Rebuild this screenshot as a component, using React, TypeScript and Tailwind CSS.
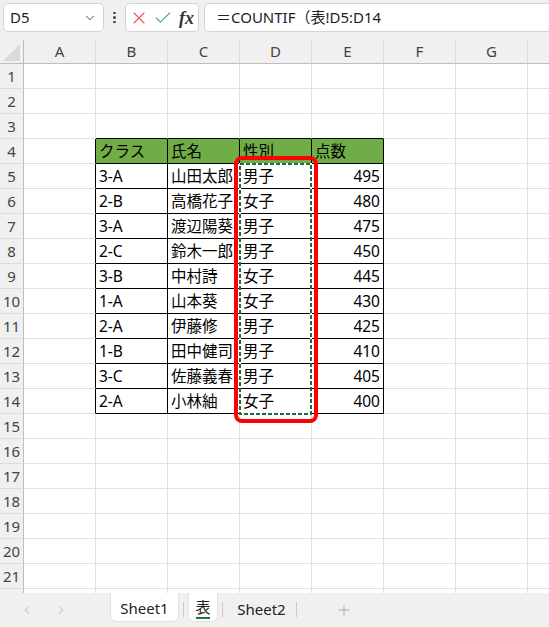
import { ChevronDown, ChevronLeft, ChevronRight, Check, X, Plus } from "lucide-react";

const columns = ["A", "B", "C", "D", "E", "F", "G", "H"];

type Student = { cls: string; name: string; sex: string; score: number };

const students: Student[] = [
    { cls: "3-A", name: "山田太郎", sex: "男子", score: 495 },
    { cls: "2-B", name: "高橋花子", sex: "女子", score: 480 },
    { cls: "3-A", name: "渡辺陽葵", sex: "男子", score: 475 },
    { cls: "2-C", name: "鈴木一郎", sex: "男子", score: 450 },
    { cls: "3-B", name: "中村詩", sex: "女子", score: 445 },
    { cls: "1-A", name: "山本葵", sex: "女子", score: 430 },
    { cls: "2-A", name: "伊藤修", sex: "男子", score: 425 },
    { cls: "1-B", name: "田中健司", sex: "男子", score: 410 },
    { cls: "3-C", name: "佐藤義春", sex: "男子", score: 405 },
    { cls: "2-A", name: "小林紬", sex: "女子", score: 400 },
];

const headers = ["クラス", "氏名", "性別", "点数"];

// table occupies rows 4-14, columns B-E (index 1-4)
const inTable = (r: number, c: number) => r >= 4 && r <= 14 && c >= 1 && c <= 4;

const cellText = (r: number, c: number): string => {
    if (!inTable(r, c)) return "";
    if (r === 4) return headers[c - 1];
    const s = students[r - 5];
    return [s.cls, s.name, s.sex, String(s.score)][c - 1];
};

const Cell = ({ r, c }: { r: number; c: number }) => {
    const right = inTable(r, c) || inTable(r, c + 1);
    const bottom = inTable(r, c) || inTable(r + 1, c);
    return (
        <div
            className={`h-[25px] w-[72px] shrink-0 border-r border-b px-[3px] text-[15.5px] leading-[24px] text-black whitespace-nowrap overflow-hidden ${
                right ? "border-r-black" : "border-r-[#e1e1e1]"
            } ${bottom ? "border-b-black" : "border-b-[#e1e1e1]"} ${r === 4 && inTable(r, c) ? "bg-[#70ad47]" : "bg-white"} ${
                c === 4 && r > 4 && inTable(r, c) ? "text-right" : "text-left"
            }`}
        >
            {cellText(r, c)}
        </div>
    );
};

const FormulaBar = () => (
    <div className="flex h-[40px] items-start pt-[3px] pl-[3px]">
        <div className="flex h-[29px] w-[101px] items-center justify-between rounded-[5px] border border-[#d4d4d4] bg-white pl-[6px] pr-[6px]">
            <span className="text-[15px] text-[#222]">D5</span>
            <ChevronDown size={14} strokeWidth={1.6} className="text-[#444]" />
        </div>
        <div className="flex h-[29px] w-[21px] flex-col items-center justify-center gap-[2px]">
            <span className="h-[2.5px] w-[2.5px] rounded-full bg-[#444]" />
            <span className="h-[2.5px] w-[2.5px] rounded-full bg-[#444]" />
            <span className="h-[2.5px] w-[2.5px] rounded-full bg-[#444]" />
        </div>
        <div className="flex h-[29px] w-[74px] items-center gap-[4px] rounded-[5px] border border-[#d4d4d4] bg-white pl-[3px]">
            <X size={20} strokeWidth={1.3} className="text-[#e8555b]" />
            <Check size={20} strokeWidth={1.3} className="text-[#4caf5a]" />
            <span className="ml-[2px] font-['Liberation_Serif',serif] text-[18px] font-bold italic leading-none text-[#333]">fx</span>
        </div>
        <div className="ml-[5px] flex h-[29px] flex-1 items-center rounded-l-[5px] border border-r-0 border-[#d4d4d4] bg-white pl-[11px]">
            <span className="text-[15px] text-[#222]">＝COUNTIF（表!D5:D14</span>
        </div>
    </div>
);

const ColumnHeader = () => (
    <div className="flex h-[24px]">
        <div className="relative h-[24px] w-[24px] shrink-0 border-r border-b border-[#bdbdbd] bg-[#f0f0f0]">
            <svg width="18" height="18" className="absolute left-[3px] top-[4px]">
                <polygon points="17,0 17,17 0,17" fill="#dadada" />
            </svg>
        </div>
        {columns.map((col) => (
            <div
                key={col}
                className="flex h-[24px] w-[72px] shrink-0 items-center justify-center border-r border-r-[#dcdcdc] border-b border-b-[#bdbdbd] bg-[#f0f0f0] text-[15px] text-[#444]"
            >
                {col === "H" ? "" : col}
            </div>
        ))}
    </div>
);

const SheetTabs = () => (
    <div className="flex h-[34px] items-start bg-[#f0f0f0]">
        <div className="flex h-[34px] w-[110px] items-center gap-[20px] pl-[20px] text-[#a8a8a8]">
            <ChevronLeft size={14} strokeWidth={1.5} />
            <ChevronRight size={14} strokeWidth={1.5} />
        </div>
        <div className="flex h-[29px] w-[69px] items-center justify-center rounded-b-[6px] border border-t-0 border-[#e2e2e2] bg-white pt-[3px] text-[15px] text-[#222]">
            Sheet1
        </div>
        <span className="mx-[4px] mt-[9px] h-[15px] w-px bg-[#c8c8c8]" />
        <div className="flex h-[29px] w-[30px] flex-col items-center justify-center rounded-b-[6px] border border-t-0 border-[#e2e2e2] bg-white pt-[3px] text-[15px] text-[#222]">
            <span className="leading-[18px]">表</span>
            <span className="mt-[1px] h-[2px] w-[14px] bg-[#217346]" />
        </div>
        <span className="mx-[4px] mt-[9px] h-[15px] w-px bg-[#c8c8c8]" />
        <div className="flex h-[29px] w-[69px] items-center justify-center pt-[3px] text-[15px] text-[#222]">Sheet2</div>
        <span className="mt-[9px] h-[15px] w-px bg-[#c8c8c8]" />
        <div className="flex h-[34px] w-[94px] items-center justify-center text-[#a0a0a0]">
            <Plus size={16} strokeWidth={1.3} />
        </div>
    </div>
);

export default function App() {
    const rowNums = Array.from({ length: 22 }, (_, i) => i + 1);

    return (
        <div className="h-[627px] w-[549px] overflow-hidden bg-[#f0f0f0] font-['Noto_Sans','Noto_Sans_CJK_JP',sans-serif]">
            <FormulaBar />
            <ColumnHeader />

            {/* sheet body */}
            <div className="relative h-[529px] overflow-hidden bg-white">
                {rowNums.map((r) => (
                    <div key={r} className="flex h-[25px]">
                        <div className="flex h-[25px] w-[24px] shrink-0 items-center justify-center border-r border-r-[#bdbdbd] border-b border-b-[#dcdcdc] bg-[#f0f0f0] text-[15px] text-[#444]">
                            {r < 22 ? r : ""}
                        </div>
                        {columns.map((_, c) => (
                            <Cell key={c} r={r} c={c} />
                        ))}
                    </div>
                ))}

                {/* copy range marquee around D5:D14 */}
                <svg width="73" height="252" className="absolute left-[239px] top-[99px]">
                    <rect x="1" y="1" width="71" height="250" fill="none" stroke="#ffffff" strokeWidth="2" />
                    <rect x="1" y="1" width="71" height="250" fill="none" stroke="#1e6b40" strokeWidth="2" strokeDasharray="4 2" />
                </svg>

                {/* red highlight box */}
                <div className="absolute left-[234px] top-[92px] h-[267px] w-[84px] rounded-[8px] border-4 border-[#ff0000]" />
            </div>

            <SheetTabs />
        </div>
    );
}
